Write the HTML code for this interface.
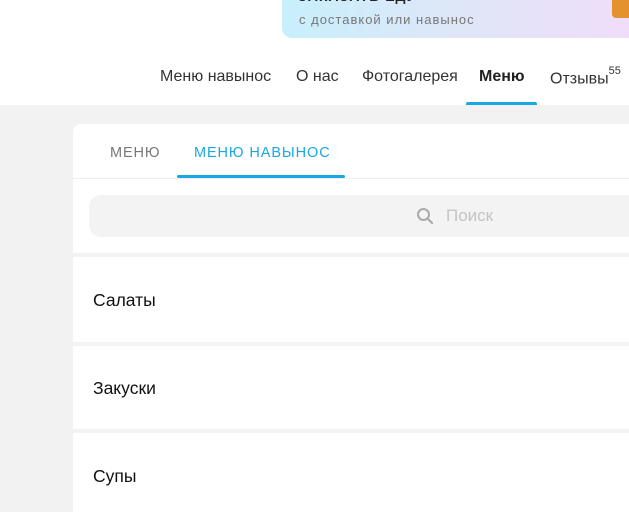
<!DOCTYPE html>
<html><head><meta charset="utf-8"><style>
*{margin:0;padding:0;box-sizing:border-box}
html,body{width:629px;height:512px;overflow:hidden}
body{background:#f2f2f2;font-family:"Liberation Sans","DejaVu Sans",sans-serif;position:relative}
.header{position:absolute;left:0;top:0;width:629px;height:105px;background:#fff}
.banner{position:absolute;left:282px;top:-10px;width:360px;height:48px;border-radius:10px;background:linear-gradient(90deg,#c8effc,#dfe6f8 50%,#f1dcfa)}
.banner .t{position:absolute;left:16px;top:-2px;font-weight:bold;font-size:14px;color:#222;letter-spacing:1px}
.banner .s{position:absolute;left:17px;top:22px;font-size:13px;color:#777;letter-spacing:1px}
.orange{position:absolute;left:612px;top:0;width:20px;height:18px;background:#e3922e;border-radius:0 0 0 4px}
.nav{position:absolute;top:68px;font-size:16px;color:#333;white-space:nowrap}
.nav sup{font-size:11px;position:relative;top:-3px}
.ul{position:absolute;left:466px;top:102px;width:71px;height:3px;background:#1aa7e6;border-radius:2px 2px 0 0}
.card{position:absolute;left:73px;top:124px;width:600px;height:400px;background:#fff;border-radius:8px}
.tab{position:absolute;top:145px;font-size:14.5px;letter-spacing:.9px}
.tabline{position:absolute;left:177px;top:175px;width:168px;height:3px;background:#1aa7e6;border-radius:2px}
.hr{position:absolute;left:73px;top:178px;width:556px;height:1px;background:#eee}
.search{position:absolute;left:89px;top:195px;width:580px;height:42px;background:#f3f3f3;border-radius:12px}
.sep{position:absolute;left:73px;width:556px;height:4px;background:#f3f3f3}
.cat{position:absolute;left:93px;font-size:17.5px;color:#111}
</style></head><body>
<div class="header"></div>
<div class="banner"><div class="t">ЗАКАЗАТЬ ЕДУ</div><div class="s">с доставкой или навынос</div></div>
<div class="orange"></div>
<div class="nav" style="left:160px">Меню навынос</div>
<div class="nav" style="left:296px">О нас</div>
<div class="nav" style="left:362px">Фотогалерея</div>
<div class="nav" style="left:479px;font-weight:bold;color:#222">Меню</div>
<div class="nav" style="left:550px">Отзывы<sup>55</sup></div>
<div class="ul"></div>
<div class="card"></div>
<div class="tab" style="left:110px;color:#777">МЕНЮ</div>
<div class="tab" style="left:194px;color:#1aa7e6">МЕНЮ НАВЫНОС</div>
<div class="tabline"></div>
<div class="hr"></div>
<div class="search"></div>
<svg style="position:absolute;left:416px;top:207px" width="18" height="18" viewBox="0 0 18 18"><circle cx="7.5" cy="7.5" r="5.5" fill="none" stroke="#aaa" stroke-width="2"/><line x1="11.5" y1="11.5" x2="16" y2="16" stroke="#aaa" stroke-width="2.2" stroke-linecap="round"/></svg>
<div style="position:absolute;left:446px;top:206px;font-size:17px;color:#c4c4c4">Поиск</div>
<div class="sep" style="top:253px"></div>
<div class="cat" style="top:290px">Салаты</div>
<div class="sep" style="top:342px"></div>
<div class="cat" style="top:378px">Закуски</div>
<div class="sep" style="top:429px"></div>
<div class="cat" style="top:466px">Супы</div>
</body></html>
